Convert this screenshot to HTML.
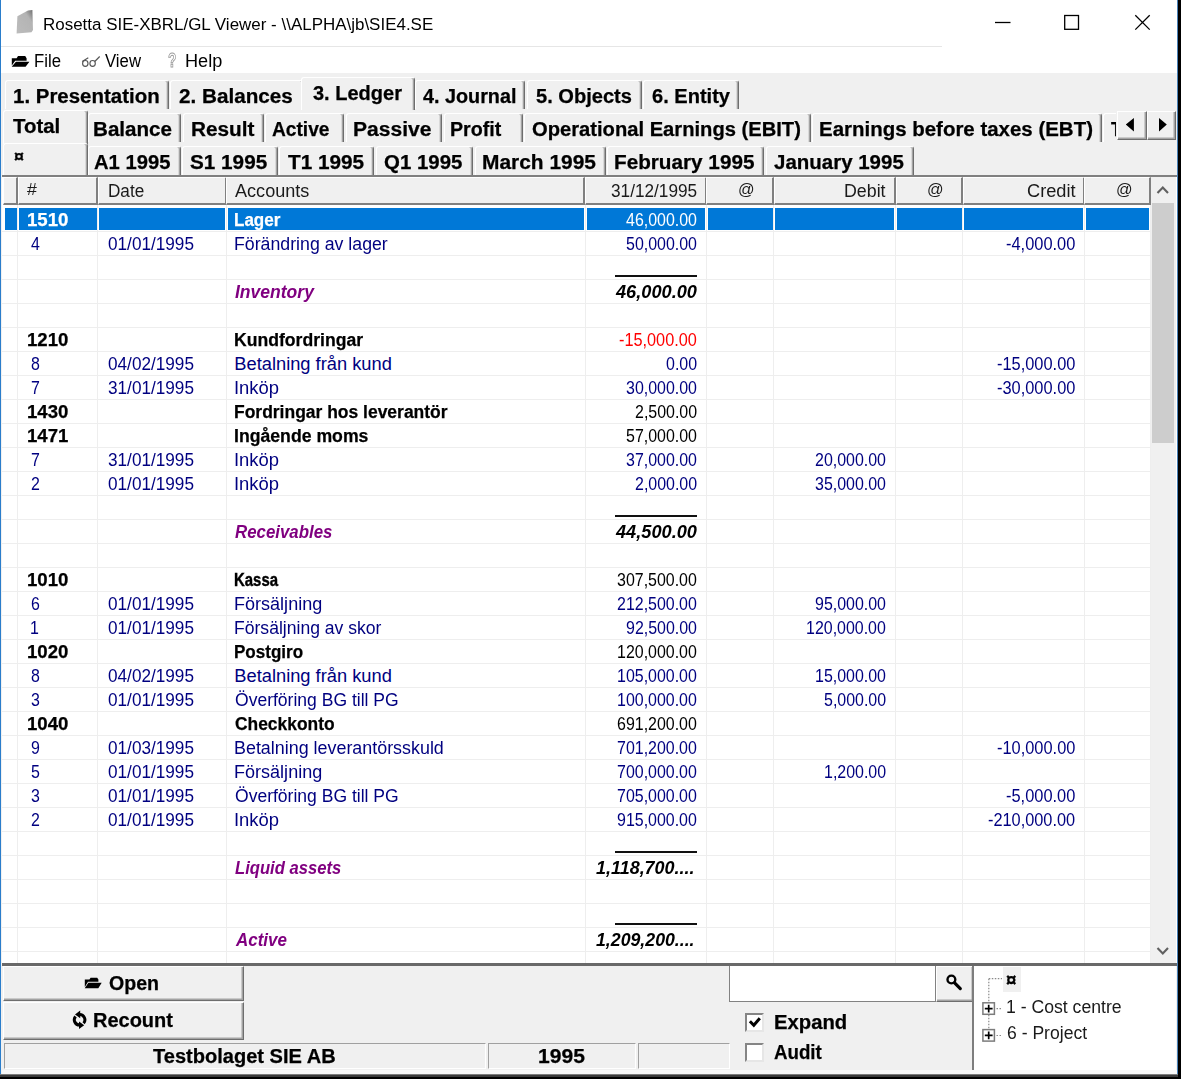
<!DOCTYPE html>
<html><head><meta charset="utf-8"><title>Rosetta SIE-XBRL/GL Viewer</title>
<style>
html,body{margin:0;padding:0;background:#f0f0f0;}
body{width:1181px;height:1079px;position:relative;overflow:hidden;font-family:"Liberation Sans", sans-serif;}
#app{position:absolute;left:0;top:0;width:1181px;height:1079px;overflow:hidden;}
#app div,#app svg{position:absolute;box-sizing:border-box;}
.t{position:absolute;white-space:pre;line-height:24px;height:24px;transform-origin:0 0;}

.tab{background:#f0f0f0;border-left:1.5px solid #fff;border-top:1.5px solid #fff;border-right:1.5px solid #6e6e6e;border-top-left-radius:3px;border-top-right-radius:3px;box-shadow:inset -1.3px 0 0 #a3a3a3;}
.hd{background:#f0f0f0;border-top:1.5px solid #fff;border-left:1.5px solid #fff;border-right:2px solid #808080;border-bottom:2px solid #808080;}
.btn{background:#f0f0f0;border-top:1.5px solid #fff;border-left:1.5px solid #fff;border-right:1.5px solid #6e6e6e;border-bottom:1.5px solid #6e6e6e;box-shadow:inset -1.5px -1.5px 0 #a3a3a3;}
.cb{background:#fff;border-top:2.5px solid #858585;border-left:2.5px solid #858585;border-right:2px solid #e6e6e6;border-bottom:2px solid #e6e6e6;}
.sunk{border-top:1.5px solid #a0a0a0;border-left:1.5px solid #a0a0a0;border-right:1.5px solid #fff;border-bottom:1.5px solid #fff;}
.sunk2{background:#fff;border-top:1.5px solid #a0a0a0;border-left:1.5px solid #a0a0a0;border-right:1.5px solid #fff;border-bottom:1.5px solid #fff;box-shadow:inset 1.5px 1.5px 0 #696969;}

</style></head><body><div id="app">
<div style="left:0px;top:0px;width:1181px;height:46px;background:#fff;"></div>
<div style="left:0px;top:46px;width:1181px;height:27px;background:#fff;"></div>
<div style="left:1px;top:46px;width:941px;height:1px;background:#e6e6e6;"></div>
<svg style="left:14px;top:7px" width="22" height="29" viewBox="14 7 22 29"><defs><linearGradient id="g1" x1="0" y1="1" x2="1" y2="0"><stop offset="0" stop-color="#bcbcbc"/><stop offset="0.7" stop-color="#b4b4b4"/><stop offset="1" stop-color="#6c6c6c"/></linearGradient><filter id="bl"><feGaussianBlur stdDeviation="0.5"/></filter></defs><path filter="url(#bl)" d="M17.4 16.2 L28 10.4 L32.4 9.9 L33 30 L31.5 32.3 L16.6 33.6 Z" fill="url(#g1)"/></svg>
<span class="t" style="left:42.61px;top:12.0px;font-size:17.2px;transform:scaleX(0.9867);">Rosetta SIE-XBRL/GL Viewer - \\ALPHA\jb\SIE4.SE</span>
<svg style="left:980px;top:0" width="197" height="46" viewBox="0 0 197 46"><g stroke="#000" stroke-width="1.3" fill="none"><path d="M15 22.5 H30.5"/><rect x="84.7" y="15.5" width="13.8" height="13.8"/><path d="M155.3 15.2 L169.7 29.6 M169.7 15.2 L155.3 29.6"/></g></svg>
<svg style="left:10px;top:54px" width="22" height="15" viewBox="10 54 22 15"><path d="M11.8 58.2 L16.6 58.2 L18 56.1 L25.2 56.1 L26.6 58.2 L26.6 60.7 L15.2 60.7 L11.8 65.6 Z M11.7 66.8 L15.9 61.7 L29.4 61.7 L25.6 66.8 Z" fill="#000"/></svg>
<span class="t" style="left:34.08px;top:48.5px;font-size:18.3px;transform:scaleX(0.9155);">File</span>
<svg style="left:80px;top:54px" width="22" height="15" viewBox="80 54 22 15"><g stroke="#555" stroke-width="1.15" fill="none"><ellipse cx="85.3" cy="63.4" rx="2.7" ry="2.9"/><ellipse cx="92.6" cy="63.4" rx="2.7" ry="2.9"/><path d="M82.2 61.6 L88.3 57.8 M94.8 61.5 L99.7 56.5"/></g></svg>
<span class="t" style="left:105.10px;top:48.5px;font-size:18.3px;transform:scaleX(0.9154);">View</span>
<span class="t" style="left:167.60px;top:47.8px;font-size:20.5px;font-weight:700;color:#fff;transform:scaleX(0.6667);-webkit-text-stroke:1px #9a9a9a;">?</span>
<span class="t" style="left:185.01px;top:48.5px;font-size:18.3px;transform:scaleX(0.9909);">Help</span>
<div class="tab" style="left:5px;top:79.5px;width:163.5px;height:29.5px"></div>
<span class="t" style="left:12.95px;top:83.5px;font-size:19.4px;font-weight:700;transform:scaleX(1.0549);-webkit-text-stroke:0.25px;">1. Presentation</span>
<div class="tab" style="left:169.5px;top:79.5px;width:134.5px;height:29.5px"></div>
<span class="t" style="left:179.00px;top:83.5px;font-size:19.4px;font-weight:700;transform:scaleX(1.0667);-webkit-text-stroke:0.25px;">2. Balances</span>
<div class="tab" style="left:415px;top:79.5px;width:110px;height:29.5px"></div>
<span class="t" style="left:422.50px;top:83.5px;font-size:19.4px;font-weight:700;transform:scaleX(1.0197);-webkit-text-stroke:0.25px;">4. Journal</span>
<div class="tab" style="left:526.5px;top:79.5px;width:115.0px;height:29.5px"></div>
<span class="t" style="left:535.70px;top:83.5px;font-size:19.4px;font-weight:700;transform:scaleX(1.0348);-webkit-text-stroke:0.25px;">5. Objects</span>
<div class="tab" style="left:642.5px;top:79.5px;width:96.5px;height:29.5px"></div>
<span class="t" style="left:651.60px;top:83.5px;font-size:19.4px;font-weight:700;transform:scaleX(1.0339);-webkit-text-stroke:0.25px;">6. Entity</span>
<div class="tab" style="left:300.5px;top:77px;width:114.0px;height:32.5px"></div>
<span class="t" style="left:312.60px;top:80.6px;font-size:19.4px;font-weight:700;transform:scaleX(1.0316);-webkit-text-stroke:0.25px;">3. Ledger</span>
<div class="tab" style="left:88px;top:112.5px;width:93px;height:29.5px"></div>
<span class="t" style="left:93.34px;top:116.7px;font-size:19.4px;font-weight:700;transform:scaleX(1.0627);-webkit-text-stroke:0.25px;">Balance</span>
<div class="tab" style="left:182.5px;top:112.5px;width:81.0px;height:29.5px"></div>
<span class="t" style="left:190.53px;top:116.7px;font-size:19.4px;font-weight:700;transform:scaleX(1.0714);-webkit-text-stroke:0.25px;">Result</span>
<div class="tab" style="left:265px;top:112.5px;width:79px;height:29.5px"></div>
<span class="t" style="left:271.60px;top:116.7px;font-size:19.4px;font-weight:700;transform:scaleX(0.9877);-webkit-text-stroke:0.25px;">Active</span>
<div class="tab" style="left:345.5px;top:112.5px;width:96.5px;height:29.5px"></div>
<span class="t" style="left:352.91px;top:116.7px;font-size:19.4px;font-weight:700;transform:scaleX(1.0860);-webkit-text-stroke:0.25px;">Passive</span>
<div class="tab" style="left:443.5px;top:112.5px;width:79.0px;height:29.5px"></div>
<span class="t" style="left:450.19px;top:116.7px;font-size:19.4px;font-weight:700;transform:scaleX(1.0126);-webkit-text-stroke:0.25px;">Profit</span>
<div class="tab" style="left:524px;top:112.5px;width:286.5px;height:29.5px"></div>
<span class="t" style="left:532.40px;top:116.7px;font-size:19.4px;font-weight:700;transform:scaleX(1.0398);-webkit-text-stroke:0.25px;">Operational Earnings (EBIT)</span>
<div class="tab" style="left:812px;top:112.5px;width:289.5px;height:29.5px"></div>
<span class="t" style="left:818.75px;top:116.7px;font-size:19.4px;font-weight:700;transform:scaleX(1.0549);-webkit-text-stroke:0.25px;">Earnings before taxes (EBT)</span>
<div class="tab" style="left:1103px;top:112.5px;width:27px;height:29.5px"></div>
<span class="t" style="left:1110.90px;top:116.7px;font-size:19.4px;font-weight:700;transform:scaleX(0.9000);-webkit-text-stroke:0.25px;">T</span>
<div class="tab" style="left:2.5px;top:110px;width:85.0px;height:34px"></div>
<span class="t" style="left:13.20px;top:113.7px;font-size:19.4px;font-weight:700;transform:scaleX(1.0519);-webkit-text-stroke:0.25px;">Total</span>
<div style="left:1116px;top:110px;width:61px;height:32px;background:#f0f0f0;"></div>
<div class="btn" style="left:1117.3px;top:111px;width:29.7px;height:29px"></div>
<div class="btn" style="left:1147px;top:111px;width:28.8px;height:29px"></div>
<svg style="left:1117px;top:111px" width="59" height="29" viewBox="0 0 59 29"><path d="M16.9 6.9 L16.9 20.4 L8.8 13.6 Z M42 6.9 L42 20.4 L49.8 13.6 Z" fill="#000"/></svg>
<div class="tab" style="left:88px;top:145.5px;width:92.5px;height:30.5px"></div>
<span class="t" style="left:94.00px;top:149.6px;font-size:19.4px;font-weight:700;transform:scaleX(1.0418);-webkit-text-stroke:0.25px;">A1 1995</span>
<div class="tab" style="left:182px;top:145.5px;width:95.5px;height:30.5px"></div>
<span class="t" style="left:190.40px;top:149.6px;font-size:19.4px;font-weight:700;transform:scaleX(1.0682);-webkit-text-stroke:0.25px;">S1 1995</span>
<div class="tab" style="left:279px;top:145.5px;width:95px;height:30.5px"></div>
<span class="t" style="left:288.00px;top:149.6px;font-size:19.4px;font-weight:700;transform:scaleX(1.0705);-webkit-text-stroke:0.25px;">T1 1995</span>
<div class="tab" style="left:375.5px;top:145.5px;width:97.5px;height:30.5px"></div>
<span class="t" style="left:384.40px;top:149.6px;font-size:19.4px;font-weight:700;transform:scaleX(1.0535);-webkit-text-stroke:0.25px;">Q1 1995</span>
<div class="tab" style="left:474.5px;top:145.5px;width:131.0px;height:30.5px"></div>
<span class="t" style="left:482.32px;top:149.6px;font-size:19.4px;font-weight:700;transform:scaleX(1.0787);-webkit-text-stroke:0.25px;">March 1995</span>
<div class="tab" style="left:607px;top:145.5px;width:157px;height:30.5px"></div>
<span class="t" style="left:613.93px;top:149.6px;font-size:19.4px;font-weight:700;transform:scaleX(1.0679);-webkit-text-stroke:0.25px;">February 1995</span>
<div class="tab" style="left:765.5px;top:145.5px;width:148.5px;height:30.5px"></div>
<span class="t" style="left:774.20px;top:149.6px;font-size:19.4px;font-weight:700;transform:scaleX(1.0560);-webkit-text-stroke:0.25px;">January 1995</span>
<div class="tab" style="left:2.5px;top:143px;width:85.0px;height:34px"></div>
<span class="t" style="left:14.20px;top:144.8px;font-size:17px;font-weight:700;transform:scaleX(1.0556);-webkit-text-stroke:0.25px;">¤</span>
<div style="left:2px;top:175px;width:1175px;height:1.6px;background:#808080;"></div>
<div style="left:2px;top:176.6px;width:1175px;height:787px;background:#fff;"></div>
<div style="left:2px;top:231px;width:1148.5px;height:1px;background:#eeeeee;"></div>
<div style="left:2px;top:255px;width:1148.5px;height:1px;background:#eeeeee;"></div>
<div style="left:2px;top:279px;width:1148.5px;height:1px;background:#eeeeee;"></div>
<div style="left:2px;top:303px;width:1148.5px;height:1px;background:#eeeeee;"></div>
<div style="left:2px;top:327px;width:1148.5px;height:1px;background:#eeeeee;"></div>
<div style="left:2px;top:351px;width:1148.5px;height:1px;background:#eeeeee;"></div>
<div style="left:2px;top:375px;width:1148.5px;height:1px;background:#eeeeee;"></div>
<div style="left:2px;top:399px;width:1148.5px;height:1px;background:#eeeeee;"></div>
<div style="left:2px;top:423px;width:1148.5px;height:1px;background:#eeeeee;"></div>
<div style="left:2px;top:447px;width:1148.5px;height:1px;background:#eeeeee;"></div>
<div style="left:2px;top:471px;width:1148.5px;height:1px;background:#eeeeee;"></div>
<div style="left:2px;top:495px;width:1148.5px;height:1px;background:#eeeeee;"></div>
<div style="left:2px;top:519px;width:1148.5px;height:1px;background:#eeeeee;"></div>
<div style="left:2px;top:543px;width:1148.5px;height:1px;background:#eeeeee;"></div>
<div style="left:2px;top:567px;width:1148.5px;height:1px;background:#eeeeee;"></div>
<div style="left:2px;top:591px;width:1148.5px;height:1px;background:#eeeeee;"></div>
<div style="left:2px;top:615px;width:1148.5px;height:1px;background:#eeeeee;"></div>
<div style="left:2px;top:639px;width:1148.5px;height:1px;background:#eeeeee;"></div>
<div style="left:2px;top:663px;width:1148.5px;height:1px;background:#eeeeee;"></div>
<div style="left:2px;top:687px;width:1148.5px;height:1px;background:#eeeeee;"></div>
<div style="left:2px;top:711px;width:1148.5px;height:1px;background:#eeeeee;"></div>
<div style="left:2px;top:735px;width:1148.5px;height:1px;background:#eeeeee;"></div>
<div style="left:2px;top:759px;width:1148.5px;height:1px;background:#eeeeee;"></div>
<div style="left:2px;top:783px;width:1148.5px;height:1px;background:#eeeeee;"></div>
<div style="left:2px;top:807px;width:1148.5px;height:1px;background:#eeeeee;"></div>
<div style="left:2px;top:831px;width:1148.5px;height:1px;background:#eeeeee;"></div>
<div style="left:2px;top:855px;width:1148.5px;height:1px;background:#eeeeee;"></div>
<div style="left:2px;top:879px;width:1148.5px;height:1px;background:#eeeeee;"></div>
<div style="left:2px;top:903px;width:1148.5px;height:1px;background:#eeeeee;"></div>
<div style="left:2px;top:927px;width:1148.5px;height:1px;background:#eeeeee;"></div>
<div style="left:2px;top:951px;width:1148.5px;height:1px;background:#eeeeee;"></div>
<div style="left:17.0px;top:205px;width:1px;height:758px;background:#eeeeee;"></div>
<div style="left:97.0px;top:205px;width:1px;height:758px;background:#eeeeee;"></div>
<div style="left:225.8px;top:205px;width:1px;height:758px;background:#eeeeee;"></div>
<div style="left:584.5px;top:205px;width:1px;height:758px;background:#eeeeee;"></div>
<div style="left:705.8px;top:205px;width:1px;height:758px;background:#eeeeee;"></div>
<div style="left:773.1px;top:205px;width:1px;height:758px;background:#eeeeee;"></div>
<div style="left:895.0px;top:205px;width:1px;height:758px;background:#eeeeee;"></div>
<div style="left:962.0px;top:205px;width:1px;height:758px;background:#eeeeee;"></div>
<div style="left:1083.9px;top:205px;width:1px;height:758px;background:#eeeeee;"></div>
<div style="left:1149.9px;top:205px;width:1px;height:758px;background:#eeeeee;"></div>
<div class="hd" style="left:2.5px;top:176.6px;width:15.5px;height:28.4px"></div>
<div class="hd" style="left:17.5px;top:176.6px;width:80.5px;height:28.4px"></div>
<div class="hd" style="left:97.5px;top:176.6px;width:129.3px;height:28.4px"></div>
<div class="hd" style="left:226.3px;top:176.6px;width:359.2px;height:28.4px"></div>
<div class="hd" style="left:585px;top:176.6px;width:121.79999999999995px;height:28.4px"></div>
<div class="hd" style="left:706.3px;top:176.6px;width:67.80000000000007px;height:28.4px"></div>
<div class="hd" style="left:773.6px;top:176.6px;width:122.39999999999998px;height:28.4px"></div>
<div class="hd" style="left:895.5px;top:176.6px;width:67.5px;height:28.4px"></div>
<div class="hd" style="left:962.5px;top:176.6px;width:122.40000000000009px;height:28.4px"></div>
<div class="hd" style="left:1084.4px;top:176.6px;width:66.5px;height:28.4px"></div>
<span class="t" style="left:27.40px;top:178.1px;font-size:15.6px;color:#1a1a1a;transform:scaleX(1.1333);">#</span>
<span class="t" style="left:107.56px;top:178.5px;font-size:18.3px;color:#1a1a1a;transform:scaleX(0.9373);">Date</span>
<span class="t" style="left:235.30px;top:178.5px;font-size:18.3px;color:#1a1a1a;transform:scaleX(0.9886);">Accounts</span>
<span class="t" style="left:611.00px;top:178.5px;font-size:18.3px;color:#1a1a1a;transform:scaleX(0.9417);">31/12/1995</span>
<span class="t" style="left:737.88px;top:178.3px;font-size:16px;color:#1a1a1a;transform:scaleX(1.0214);">@</span>
<span class="t" style="left:844.23px;top:178.5px;font-size:18.3px;color:#1a1a1a;transform:scaleX(0.9736);">Debit</span>
<span class="t" style="left:926.78px;top:178.3px;font-size:16px;color:#1a1a1a;transform:scaleX(1.0214);">@</span>
<span class="t" style="left:1027.00px;top:178.5px;font-size:18.3px;color:#1a1a1a;transform:scaleX(0.9962);">Credit</span>
<span class="t" style="left:1115.68px;top:178.3px;font-size:16px;color:#1a1a1a;transform:scaleX(1.0214);">@</span>
<div style="left:5.0px;top:207.8px;width:11.5px;height:22.6px;background:#0078d7;"></div>
<div style="left:19.0px;top:207.8px;width:77.5px;height:22.6px;background:#0078d7;"></div>
<div style="left:99.0px;top:207.8px;width:126.30000000000001px;height:22.6px;background:#0078d7;"></div>
<div style="left:227.8px;top:207.8px;width:356.2px;height:22.6px;background:#0078d7;"></div>
<div style="left:586.5px;top:207.8px;width:118.79999999999995px;height:22.6px;background:#0078d7;"></div>
<div style="left:707.8px;top:207.8px;width:64.80000000000007px;height:22.6px;background:#0078d7;"></div>
<div style="left:775.1px;top:207.8px;width:119.39999999999998px;height:22.6px;background:#0078d7;"></div>
<div style="left:897.0px;top:207.8px;width:64.5px;height:22.6px;background:#0078d7;"></div>
<div style="left:964.0px;top:207.8px;width:119.40000000000009px;height:22.6px;background:#0078d7;"></div>
<div style="left:1085.9px;top:207.8px;width:63.5px;height:22.6px;background:#0078d7;"></div>
<div style="left:1151px;top:177px;width:24.5px;height:786px;background:#f0f0f0;"></div>
<div style="left:1152px;top:202.5px;width:22px;height:240px;background:#cdcdcd;"></div>
<svg style="left:1151px;top:177px" width="24" height="786" viewBox="0 0 24 786"><g stroke="#606060" stroke-width="2.1" fill="none"><path d="M6.5 16 L11.8 10.5 L17 16"/><path d="M6.5 771 L11.8 776.5 L17 771"/></g></svg>
<div style="left:2px;top:963px;width:1175px;height:3px;background:#696969;"></div>
<span class="t" style="left:26.78px;top:207.5px;font-size:18.3px;font-weight:700;color:#fff;transform:scaleX(1.0177);-webkit-text-stroke:0.25px;">1510</span>
<span class="t" style="left:234.37px;top:207.5px;font-size:18.3px;font-weight:700;color:#fff;transform:scaleX(0.9308);-webkit-text-stroke:0.25px;">Lager</span>
<span class="t" style="left:625.75px;top:207.5px;font-size:18.3px;color:#fff;transform:scaleX(0.8730);">46,000.00</span>
<span class="t" style="left:30.80px;top:231.5px;font-size:18.3px;color:#000080;transform:scaleX(0.8730);">4</span>
<span class="t" style="left:108.00px;top:231.5px;font-size:18.3px;color:#000080;transform:scaleX(0.9395);">01/01/1995</span>
<span class="t" style="left:234.33px;top:231.5px;font-size:18.3px;color:#000080;transform:scaleX(0.9699);">Förändring av lager</span>
<span class="t" style="left:625.75px;top:231.5px;font-size:18.3px;color:#000080;transform:scaleX(0.8730);">50,000.00</span>
<span class="t" style="left:1005.60px;top:231.5px;font-size:18.3px;color:#000080;transform:scaleX(0.8977);">-4,000.00</span>
<span class="t" style="left:235.30px;top:279.5px;font-size:18.3px;font-weight:700;font-style:italic;color:#800080;transform:scaleX(0.9589);">Inventory</span>
<span class="t" style="left:615.70px;top:279.5px;font-size:18.3px;font-weight:700;font-style:italic;transform:scaleX(0.9956);">46,000.00</span>
<div style="left:614.5px;top:275.25px;width:82.3px;height:1.6px;background:#111;"></div>
<span class="t" style="left:26.78px;top:327.5px;font-size:18.3px;font-weight:700;transform:scaleX(1.0177);-webkit-text-stroke:0.25px;">1210</span>
<span class="t" style="left:234.34px;top:327.5px;font-size:18.3px;font-weight:700;transform:scaleX(0.9629);-webkit-text-stroke:0.25px;">Kundfordringar</span>
<span class="t" style="left:618.90px;top:327.5px;font-size:18.3px;color:#ff0000;transform:scaleX(0.8906);">-15,000.00</span>
<span class="t" style="left:30.80px;top:351.5px;font-size:18.3px;color:#000080;transform:scaleX(0.8730);">8</span>
<span class="t" style="left:108.00px;top:351.5px;font-size:18.3px;color:#000080;transform:scaleX(0.9395);">04/02/1995</span>
<span class="t" style="left:234.30px;top:351.5px;font-size:18.3px;color:#000080;">Betalning från kund</span>
<span class="t" style="left:665.68px;top:351.5px;font-size:18.3px;color:#000080;transform:scaleX(0.8730);">0.00</span>
<span class="t" style="left:996.60px;top:351.5px;font-size:18.3px;color:#000080;transform:scaleX(0.8963);">-15,000.00</span>
<span class="t" style="left:30.80px;top:375.5px;font-size:18.3px;color:#000080;transform:scaleX(0.8730);">7</span>
<span class="t" style="left:108.00px;top:375.5px;font-size:18.3px;color:#000080;transform:scaleX(0.9395);">31/01/1995</span>
<span class="t" style="left:234.29px;top:375.5px;font-size:18.3px;color:#000080;transform:scaleX(1.0079);">Inköp</span>
<span class="t" style="left:625.75px;top:375.5px;font-size:18.3px;color:#000080;transform:scaleX(0.8730);">30,000.00</span>
<span class="t" style="left:996.60px;top:375.5px;font-size:18.3px;color:#000080;transform:scaleX(0.8963);">-30,000.00</span>
<span class="t" style="left:26.78px;top:399.5px;font-size:18.3px;font-weight:700;transform:scaleX(1.0177);-webkit-text-stroke:0.25px;">1430</span>
<span class="t" style="left:234.34px;top:399.5px;font-size:18.3px;font-weight:700;transform:scaleX(0.9556);-webkit-text-stroke:0.25px;">Fordringar hos leverantör</span>
<span class="t" style="left:634.62px;top:399.5px;font-size:18.3px;transform:scaleX(0.8730);">2,500.00</span>
<span class="t" style="left:26.78px;top:423.5px;font-size:18.3px;font-weight:700;transform:scaleX(1.0177);-webkit-text-stroke:0.25px;">1471</span>
<span class="t" style="left:234.33px;top:423.5px;font-size:18.3px;font-weight:700;transform:scaleX(0.9659);-webkit-text-stroke:0.25px;">Ingående moms</span>
<span class="t" style="left:625.75px;top:423.5px;font-size:18.3px;transform:scaleX(0.8730);">57,000.00</span>
<span class="t" style="left:30.80px;top:447.5px;font-size:18.3px;color:#000080;transform:scaleX(0.8730);">7</span>
<span class="t" style="left:108.00px;top:447.5px;font-size:18.3px;color:#000080;transform:scaleX(0.9395);">31/01/1995</span>
<span class="t" style="left:234.29px;top:447.5px;font-size:18.3px;color:#000080;transform:scaleX(1.0079);">Inköp</span>
<span class="t" style="left:625.75px;top:447.5px;font-size:18.3px;color:#000080;transform:scaleX(0.8730);">37,000.00</span>
<span class="t" style="left:814.75px;top:447.5px;font-size:18.3px;color:#000080;transform:scaleX(0.8730);">20,000.00</span>
<span class="t" style="left:30.80px;top:471.5px;font-size:18.3px;color:#000080;transform:scaleX(0.8730);">2</span>
<span class="t" style="left:108.00px;top:471.5px;font-size:18.3px;color:#000080;transform:scaleX(0.9395);">01/01/1995</span>
<span class="t" style="left:234.29px;top:471.5px;font-size:18.3px;color:#000080;transform:scaleX(1.0079);">Inköp</span>
<span class="t" style="left:634.62px;top:471.5px;font-size:18.3px;color:#000080;transform:scaleX(0.8730);">2,000.00</span>
<span class="t" style="left:814.75px;top:471.5px;font-size:18.3px;color:#000080;transform:scaleX(0.8730);">35,000.00</span>
<span class="t" style="left:235.30px;top:519.5px;font-size:18.3px;font-weight:700;font-style:italic;color:#800080;transform:scaleX(0.9211);">Receivables</span>
<span class="t" style="left:615.70px;top:519.5px;font-size:18.3px;font-weight:700;font-style:italic;transform:scaleX(0.9956);">44,500.00</span>
<div style="left:614.5px;top:515.25px;width:82.3px;height:1.6px;background:#111;"></div>
<span class="t" style="left:26.78px;top:567.5px;font-size:18.3px;font-weight:700;transform:scaleX(1.0177);-webkit-text-stroke:0.25px;">1010</span>
<span class="t" style="left:234.48px;top:567.5px;font-size:18.3px;font-weight:700;transform:scaleX(0.8174);-webkit-text-stroke:0.40px;">Kassa</span>
<span class="t" style="left:616.87px;top:567.5px;font-size:18.3px;transform:scaleX(0.8730);">307,500.00</span>
<span class="t" style="left:30.80px;top:591.5px;font-size:18.3px;color:#000080;transform:scaleX(0.8730);">6</span>
<span class="t" style="left:108.00px;top:591.5px;font-size:18.3px;color:#000080;transform:scaleX(0.9395);">01/01/1995</span>
<span class="t" style="left:234.31px;top:591.5px;font-size:18.3px;color:#000080;transform:scaleX(0.9868);">Försäljning</span>
<span class="t" style="left:616.87px;top:591.5px;font-size:18.3px;color:#000080;transform:scaleX(0.8730);">212,500.00</span>
<span class="t" style="left:814.75px;top:591.5px;font-size:18.3px;color:#000080;transform:scaleX(0.8730);">95,000.00</span>
<span class="t" style="left:29.93px;top:615.5px;font-size:18.3px;color:#000080;transform:scaleX(0.8730);">1</span>
<span class="t" style="left:108.00px;top:615.5px;font-size:18.3px;color:#000080;transform:scaleX(0.9395);">01/01/1995</span>
<span class="t" style="left:234.34px;top:615.5px;font-size:18.3px;color:#000080;transform:scaleX(0.9611);">Försäljning av skor</span>
<span class="t" style="left:625.75px;top:615.5px;font-size:18.3px;color:#000080;transform:scaleX(0.8730);">92,500.00</span>
<span class="t" style="left:805.87px;top:615.5px;font-size:18.3px;color:#000080;transform:scaleX(0.8730);">120,000.00</span>
<span class="t" style="left:26.78px;top:639.5px;font-size:18.3px;font-weight:700;transform:scaleX(1.0177);-webkit-text-stroke:0.25px;">1020</span>
<span class="t" style="left:234.37px;top:639.5px;font-size:18.3px;font-weight:700;transform:scaleX(0.9318);-webkit-text-stroke:0.25px;">Postgiro</span>
<span class="t" style="left:616.87px;top:639.5px;font-size:18.3px;transform:scaleX(0.8730);">120,000.00</span>
<span class="t" style="left:30.80px;top:663.5px;font-size:18.3px;color:#000080;transform:scaleX(0.8730);">8</span>
<span class="t" style="left:108.00px;top:663.5px;font-size:18.3px;color:#000080;transform:scaleX(0.9395);">04/02/1995</span>
<span class="t" style="left:234.30px;top:663.5px;font-size:18.3px;color:#000080;">Betalning från kund</span>
<span class="t" style="left:616.87px;top:663.5px;font-size:18.3px;color:#000080;transform:scaleX(0.8730);">105,000.00</span>
<span class="t" style="left:814.75px;top:663.5px;font-size:18.3px;color:#000080;transform:scaleX(0.8730);">15,000.00</span>
<span class="t" style="left:30.80px;top:687.5px;font-size:18.3px;color:#000080;transform:scaleX(0.8730);">3</span>
<span class="t" style="left:108.00px;top:687.5px;font-size:18.3px;color:#000080;transform:scaleX(0.9395);">01/01/1995</span>
<span class="t" style="left:235.30px;top:687.5px;font-size:18.3px;color:#000080;transform:scaleX(0.9590);">Överföring BG till PG</span>
<span class="t" style="left:616.87px;top:687.5px;font-size:18.3px;color:#000080;transform:scaleX(0.8730);">100,000.00</span>
<span class="t" style="left:823.62px;top:687.5px;font-size:18.3px;color:#000080;transform:scaleX(0.8730);">5,000.00</span>
<span class="t" style="left:26.78px;top:711.5px;font-size:18.3px;font-weight:700;transform:scaleX(1.0177);-webkit-text-stroke:0.25px;">1040</span>
<span class="t" style="left:235.30px;top:711.5px;font-size:18.3px;font-weight:700;transform:scaleX(0.9516);-webkit-text-stroke:0.25px;">Checkkonto</span>
<span class="t" style="left:616.87px;top:711.5px;font-size:18.3px;transform:scaleX(0.8730);">691,200.00</span>
<span class="t" style="left:30.80px;top:735.5px;font-size:18.3px;color:#000080;transform:scaleX(0.8730);">9</span>
<span class="t" style="left:108.00px;top:735.5px;font-size:18.3px;color:#000080;transform:scaleX(0.9395);">01/03/1995</span>
<span class="t" style="left:234.32px;top:735.5px;font-size:18.3px;color:#000080;transform:scaleX(0.9785);">Betalning leverantörsskuld</span>
<span class="t" style="left:616.87px;top:735.5px;font-size:18.3px;color:#000080;transform:scaleX(0.8730);">701,200.00</span>
<span class="t" style="left:996.60px;top:735.5px;font-size:18.3px;color:#000080;transform:scaleX(0.8963);">-10,000.00</span>
<span class="t" style="left:30.80px;top:759.5px;font-size:18.3px;color:#000080;transform:scaleX(0.8730);">5</span>
<span class="t" style="left:108.00px;top:759.5px;font-size:18.3px;color:#000080;transform:scaleX(0.9395);">01/01/1995</span>
<span class="t" style="left:234.31px;top:759.5px;font-size:18.3px;color:#000080;transform:scaleX(0.9868);">Försäljning</span>
<span class="t" style="left:616.87px;top:759.5px;font-size:18.3px;color:#000080;transform:scaleX(0.8730);">700,000.00</span>
<span class="t" style="left:823.62px;top:759.5px;font-size:18.3px;color:#000080;transform:scaleX(0.8730);">1,200.00</span>
<span class="t" style="left:30.80px;top:783.5px;font-size:18.3px;color:#000080;transform:scaleX(0.8730);">3</span>
<span class="t" style="left:108.00px;top:783.5px;font-size:18.3px;color:#000080;transform:scaleX(0.9395);">01/01/1995</span>
<span class="t" style="left:235.30px;top:783.5px;font-size:18.3px;color:#000080;transform:scaleX(0.9590);">Överföring BG till PG</span>
<span class="t" style="left:616.87px;top:783.5px;font-size:18.3px;color:#000080;transform:scaleX(0.8730);">705,000.00</span>
<span class="t" style="left:1005.60px;top:783.5px;font-size:18.3px;color:#000080;transform:scaleX(0.8977);">-5,000.00</span>
<span class="t" style="left:30.80px;top:807.5px;font-size:18.3px;color:#000080;transform:scaleX(0.8730);">2</span>
<span class="t" style="left:108.00px;top:807.5px;font-size:18.3px;color:#000080;transform:scaleX(0.9395);">01/01/1995</span>
<span class="t" style="left:234.29px;top:807.5px;font-size:18.3px;color:#000080;transform:scaleX(1.0079);">Inköp</span>
<span class="t" style="left:616.87px;top:807.5px;font-size:18.3px;color:#000080;transform:scaleX(0.8730);">915,000.00</span>
<span class="t" style="left:987.80px;top:807.5px;font-size:18.3px;color:#000080;transform:scaleX(0.8931);">-210,000.00</span>
<span class="t" style="left:235.30px;top:855.5px;font-size:18.3px;font-weight:700;font-style:italic;color:#800080;transform:scaleX(0.9103);">Liquid assets</span>
<span class="t" style="left:595.60px;top:855.5px;font-size:18.3px;font-weight:700;font-style:italic;transform:scaleX(0.9828);">1,118,700....</span>
<div style="left:614.5px;top:851.25px;width:82.3px;height:1.6px;background:#111;"></div>
<span class="t" style="left:236.23px;top:927.5px;font-size:18.3px;font-weight:700;font-style:italic;color:#800080;transform:scaleX(0.9281);">Active</span>
<span class="t" style="left:595.60px;top:927.5px;font-size:18.3px;font-weight:700;font-style:italic;transform:scaleX(0.9695);">1,209,200....</span>
<div style="left:614.5px;top:923.25px;width:82.3px;height:1.6px;background:#111;"></div>
<div style="left:2px;top:966px;width:1175px;height:108px;background:#f0f0f0;"></div>
<div class="btn" style="left:3px;top:966px;width:240.5px;height:35px"></div>
<div class="btn" style="left:3px;top:1001.5px;width:240.5px;height:38px"></div>
<svg style="left:83px;top:976px" width="20" height="14" viewBox="83 976 20 14"><path d="M84.8 979.6 L89.4 979.6 L90.6 977.7 L97.2 977.7 L98.4 979.6 L98.4 981.7 L88 981.7 L84.8 987 Z M84.7 988.2 L88.4 982.7 L101.7 982.7 L98.3 988.2 Z" fill="#000"/></svg>
<span class="t" style="left:108.60px;top:970.5px;font-size:19.4px;font-weight:700;transform:scaleX(1.0100);-webkit-text-stroke:0.25px;">Open</span>
<svg style="left:70px;top:1008px" width="20" height="24" viewBox="70 1008 20 24"><g fill="none" stroke="#000" stroke-width="3"><path d="M79.6 1014.6 A5.2 5.2 0 0 1 83.6 1023.2"/><path d="M79.6 1025 A5.2 5.2 0 0 1 75.6 1016.4"/></g><path d="M80.2 1010.6 L80.2 1018.2 L75 1014.4 Z M79 1021.4 L79 1029 L84.2 1025.2 Z" fill="#000"/></svg>
<span class="t" style="left:93.37px;top:1008.3px;font-size:19.4px;font-weight:700;transform:scaleX(1.0298);-webkit-text-stroke:0.25px;">Recount</span>
<div class="sunk" style="left:4px;top:1042.5px;width:482px;height:26.5px"></div>
<div class="sunk" style="left:487.5px;top:1042.5px;width:148px;height:26.5px"></div>
<div class="sunk" style="left:637.5px;top:1042.5px;width:92px;height:26.5px"></div>
<span class="t" style="left:153.00px;top:1044.0px;font-size:19.4px;font-weight:700;transform:scaleX(1.0338);-webkit-text-stroke:0.25px;">Testbolaget SIE AB</span>
<span class="t" style="left:537.91px;top:1044.0px;font-size:19.4px;font-weight:700;transform:scaleX(1.0861);-webkit-text-stroke:0.25px;">1995</span>
<div style="left:729px;top:965.5px;width:206.5px;height:36px;background:#fff;border:1.5px solid #828282;border-top:none"></div>
<div class="btn" style="left:935.5px;top:965.5px;width:38px;height:36px"></div>
<svg style="left:943px;top:971px" width="22" height="22" viewBox="943 971 22 22"><circle cx="951.4" cy="979.5" r="3.9" stroke="#000" stroke-width="2.4" fill="none"/><path d="M954.6 982.8 L960.3 988.6" stroke="#000" stroke-width="3.2" stroke-linecap="round"/></svg>
<div class="cb" style="left:745.2px;top:1012.7px;width:19px;height:19px"></div>
<svg style="left:745px;top:1012px" width="20" height="20" viewBox="745 1012 20 20"><path d="M749.9 1021.3 L753.8 1025.2 L759.8 1018.2" stroke="#000" stroke-width="3" fill="none"/></svg>
<div class="cb" style="left:745.2px;top:1042.7px;width:19px;height:19px"></div>
<span class="t" style="left:773.56px;top:1009.5px;font-size:19.4px;font-weight:700;transform:scaleX(1.0441);-webkit-text-stroke:0.25px;">Expand</span>
<span class="t" style="left:773.60px;top:1039.6px;font-size:19.4px;font-weight:700;transform:scaleX(0.9645);-webkit-text-stroke:0.25px;">Audit</span>
<div style="left:971.6px;top:965.5px;width:2.6px;height:106px;background:#7e7e7e;"></div>
<div style="left:974px;top:965.5px;width:201.5px;height:106px;background:#fff;"></div>
<div style="left:1002.5px;top:966.6px;width:18.5px;height:25.8px;background:#f0f0f0;"></div>
<span class="t" style="left:1006.00px;top:968.0px;font-size:18px;font-weight:700;transform:scaleX(1.0500);-webkit-text-stroke:0.25px;">¤</span>
<span class="t" style="left:1006.04px;top:994.5px;font-size:18.3px;color:#1a1a1a;transform:scaleX(0.9644);">1 - Cost centre</span>
<span class="t" style="left:1007.00px;top:1021.2px;font-size:18.3px;color:#1a1a1a;transform:scaleX(0.9612);">6 - Project</span>
<svg style="left:980px;top:970px" width="30" height="80" viewBox="980 970 30 80"><g stroke="#8a8a8a" stroke-width="1.2" stroke-dasharray="1.5 1.5" fill="none"><path d="M988.8 978.7 H1002 M988.8 978.7 V1030 M996.5 1008.7 H1002 M996.5 1035.5 H1002"/></g><g fill="#fff" stroke="#7c7c7c" stroke-width="1.5"><rect x="982.9" y="1002.8" width="11.5" height="11.5"/><rect x="982.9" y="1029.6" width="11.5" height="11.5"/></g><g stroke="#000" stroke-width="1.7"><path d="M984.8 1008.6 H992.6 M988.7 1004.7 V1012.5 M984.8 1035.4 H992.6 M988.7 1031.5 V1039.3"/></g></svg>
<div style="left:0px;top:0px;width:1.3px;height:1079px;background:#2a7dcb;"></div>
<div style="left:1176.7px;top:0px;width:1.3px;height:1079px;background:#4a82b8;"></div>
<div style="left:1178px;top:0px;width:3px;height:1079px;background:#000;"></div>
<div style="left:2px;top:1070px;width:1175px;height:3.5px;background:#f7f7f7;"></div>
<div style="left:0px;top:1073.5px;width:1178px;height:1.7px;background:#7c7c7c;"></div>
<div style="left:0px;top:1075.2px;width:1178px;height:1.5px;background:#3a3a3a;"></div>
<div style="left:0px;top:1076.6px;width:1181px;height:2.4px;background:#000;"></div>
</div></body></html>
